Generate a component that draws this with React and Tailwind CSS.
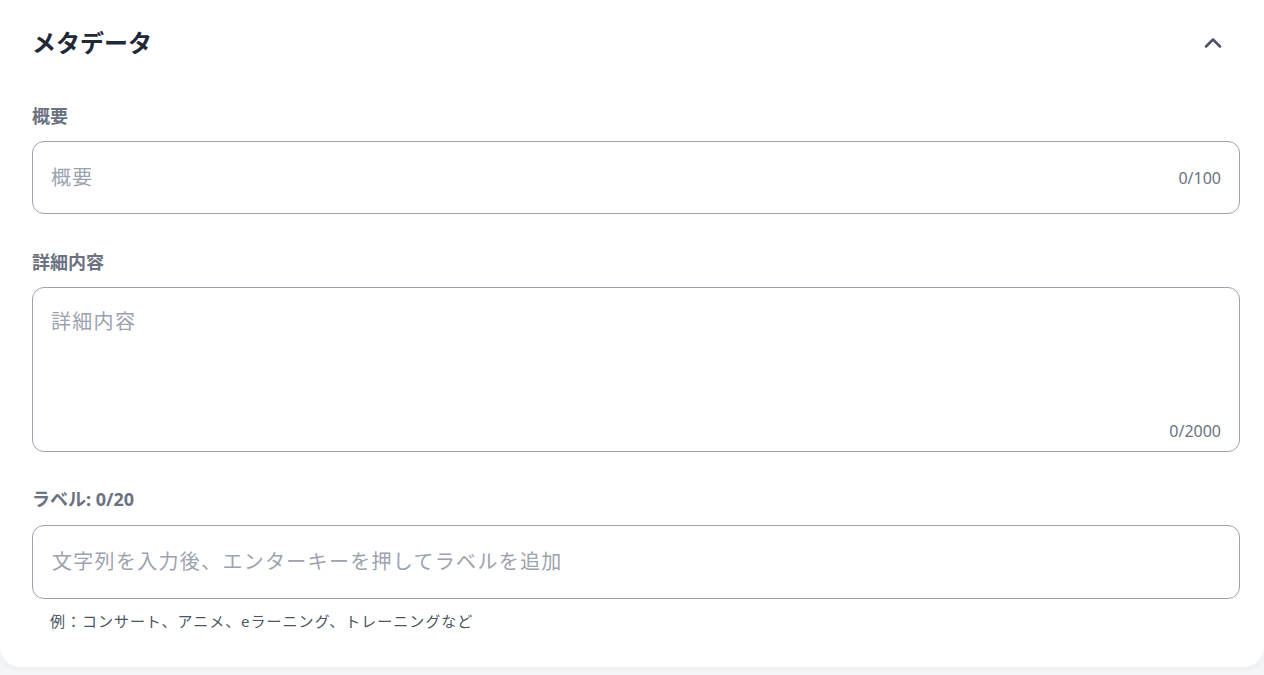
import { ChevronUp } from 'lucide-react';

const font = { fontFamily: '"Noto Sans", "Noto Sans CJK JP", sans-serif' };

function Counter({ children }) {
  return <span className="text-[16px] text-[#6b7280]">{children}</span>;
}

export default function App() {
  return (
    <div className="min-h-screen bg-[#f4f5f6]" style={font}>
      <div className="bg-white rounded-b-[20px] shadow-[0_2px_6px_rgba(0,0,0,0.04)] pl-8 pr-6 pt-[25px] pb-[34px]">
        <div className="flex items-center justify-between">
          <h2 className="text-[24px] font-bold text-[#1f2937] leading-9">メタデータ</h2>
          <button className="mr-[13px] text-[#4b5563]">
            <ChevronUp className="w-7 h-7" strokeWidth={2.2} />
          </button>
        </div>

        <div className="mt-[43px]">
          <label className="block text-[18px] font-bold text-[#6b7280] leading-6">概要</label>
          <div className="mt-[13px] h-[73px] rounded-xl border border-[#9ca3af] flex items-center justify-between pl-[18px] pr-[18px]">
            <input
              placeholder="概要"
              className="flex-1 bg-transparent outline-none text-[20px] tracking-[0.065em] placeholder:text-[#9ca3af]"
            />
            <Counter>0/100</Counter>
          </div>
        </div>

        <div className="mt-[36px]">
          <label className="block text-[18px] font-bold text-[#6b7280] leading-6">詳細内容</label>
          <div className="mt-[13px] h-[165px] rounded-xl border border-[#9ca3af] flex flex-col pl-[18px] pr-[18px] pt-[19px] pb-[8px]">
            <textarea
              placeholder="詳細内容"
              className="flex-1 resize-none bg-transparent outline-none text-[20px] tracking-[0.065em] placeholder:text-[#9ca3af]"
            />
            <div className="text-right">
              <Counter>0/2000</Counter>
            </div>
          </div>
        </div>

        <div className="mt-[35px]">
          <label className="block text-[18px] font-bold text-[#6b7280] leading-6">ラベル: 0/20</label>
          <div className="mt-[14px] h-[74px] rounded-xl border border-[#9ca3af] flex items-center pl-[19px] pr-[18px]">
            <input
              placeholder="文字列を入力後、エンターキーを押してラベルを追加"
              className="flex-1 bg-transparent outline-none text-[20px] tracking-[0.065em] placeholder:text-[#9ca3af]"
            />
          </div>
          <p className="mt-[11px] pl-[18px] text-[15px] text-[#4b5563] tracking-[0.065em]">
            例：コンサート、アニメ、eラーニング、トレーニングなど
          </p>
        </div>
      </div>
    </div>
  );
}
